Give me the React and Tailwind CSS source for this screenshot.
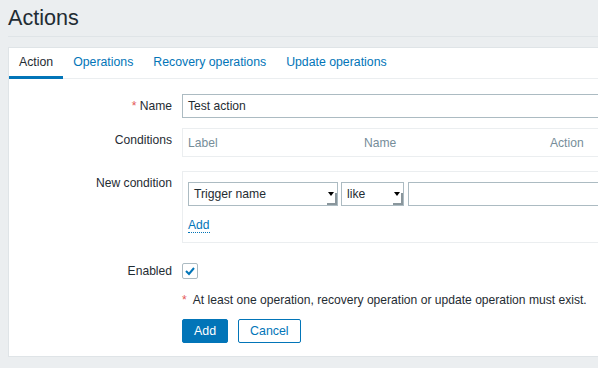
import React from "react";

function Select({ width, label }) {
  return (
    <div
      className={`relative h-[24px] ${width} border border-[#acbbc2] bg-white flex items-center pl-[5px] text-[12.2px] text-[#1f2c33] leading-[14px]`}
    >
      {label}
      <div className="absolute right-[3px] top-[9px] w-0 h-0 border-l-[3px] border-r-[3px] border-t-[4px] border-l-transparent border-r-transparent border-t-[#000]"></div>
      <div className="absolute right-0 bottom-0 w-[10px] h-[12px] border-r-2 border-b-2 border-[#8a969c]"></div>
    </div>
  );
}

export default function App() {
  return (
    <div className="w-[598px] h-[368px] overflow-hidden bg-[#ebeef0] font-['Liberation_Sans',Arial,sans-serif] text-[#1f2c33]">
      <div className="ml-[8px] w-[640px] h-[37px] border-b border-[#dfe4e7] flex items-center">
        <h1 className="text-[21.6px] leading-[24px] font-normal">Actions</h1>
      </div>
      <div className="ml-[8px] mt-[10px] w-[640px] bg-white border border-[#dfe4e7] pb-[13px]">
        <div className="flex border-b border-[#ebeef0] text-[12.3px]">
          <div className="h-[31px] -mb-px px-[10px] pt-[1px] flex items-center border-b-[3px] border-[#0275b8] text-[#1f2c33]">
            Action
          </div>
          <div className="h-[31px] -mb-px px-[10px] pt-[1px] flex items-center border-b-[3px] border-transparent text-[#0275b8]">
            Operations
          </div>
          <div className="h-[31px] -mb-px px-[10px] pt-[1px] flex items-center border-b-[3px] border-transparent text-[#0275b8]">
            Recovery operations
          </div>
          <div className="h-[31px] -mb-px px-[10px] pt-[1px] flex items-center border-b-[3px] border-transparent text-[#0275b8]">
            Update operations
          </div>
        </div>

        <div className="pt-[15px] flex flex-col text-[12.1px] leading-[14px]">
          {/* Name */}
          <div className="flex items-center">
            <div className="w-[163px] text-right">
              <span className="text-[#e45959]">*</span> Name
            </div>
            <div className="ml-[10px] w-[460px] h-[24px] border border-[#acbbc2] flex items-center pl-[5px]">
              Test action
            </div>
          </div>

          {/* Conditions */}
          <div className="flex mt-[10px]">
            <div className="w-[163px] text-right pt-[5px]">Conditions</div>
            <div className="ml-[10px] w-[460px] h-[29px] border border-[#ebeef0] flex items-center text-[#768d99]">
              <div className="w-[176px] pl-[5px]">Label</div>
              <div className="w-[186px] pl-[5px]">Name</div>
              <div className="pl-[5px]">Action</div>
            </div>
          </div>

          {/* New condition */}
          <div className="flex mt-[14px]">
            <div className="w-[163px] text-right pt-[5px]">New condition</div>
            <div className="ml-[10px] w-[460px] border border-[#ebeef0] pt-[10px] pb-[9px] pl-[5px]">
              <div className="flex">
                <Select width="w-[150px]" label="Trigger name" />
                <div className="ml-[3px]">
                  <Select width="w-[63px]" label="like" />
                </div>
                <div className="ml-[4px] flex-1 h-[24px] border border-[#acbbc2]"></div>
              </div>
              <div className="mt-[12px]">
                <span className="inline-block leading-[14px] text-[#0275b8] border-b border-dotted border-[#0275b8]">
                  Add
                </span>
              </div>
            </div>
          </div>

          {/* Enabled */}
          <div className="flex items-center mt-[20px]">
            <div className="w-[163px] text-right">Enabled</div>
            <div className="ml-[10px] w-[16px] h-[16px] border border-[#acbbc2] rounded-[2px] flex items-center justify-center">
              <svg width="12" height="12" viewBox="0 0 12 12">
                <polyline
                  points="2,6 5,9 10,3"
                  fill="none"
                  stroke="#0275b8"
                  strokeWidth="2"
                />
              </svg>
            </div>
          </div>

          {/* Note */}
          <div className="flex mt-[14px]">
            <div className="w-[163px]"></div>
            <div className="ml-[10px]">
              <span className="text-[#e45959]">*</span>&nbsp; At least one operation, recovery operation or update operation must exist.
            </div>
          </div>

          {/* Buttons */}
          <div className="flex mt-[12px]">
            <div className="w-[163px]"></div>
            <div className="ml-[10px] flex gap-[10px]">
              <button className="h-[24px] px-[11px] bg-[#0275b8] border border-[#0275b8] rounded-[2px] text-white text-[12.4px]">
                Add
              </button>
              <button className="h-[24px] px-[11px] bg-white border border-[#0275b8] rounded-[2px] text-[#0275b8] text-[12.4px]">
                Cancel
              </button>
            </div>
          </div>
        </div>
      </div>
    </div>
  );
}
